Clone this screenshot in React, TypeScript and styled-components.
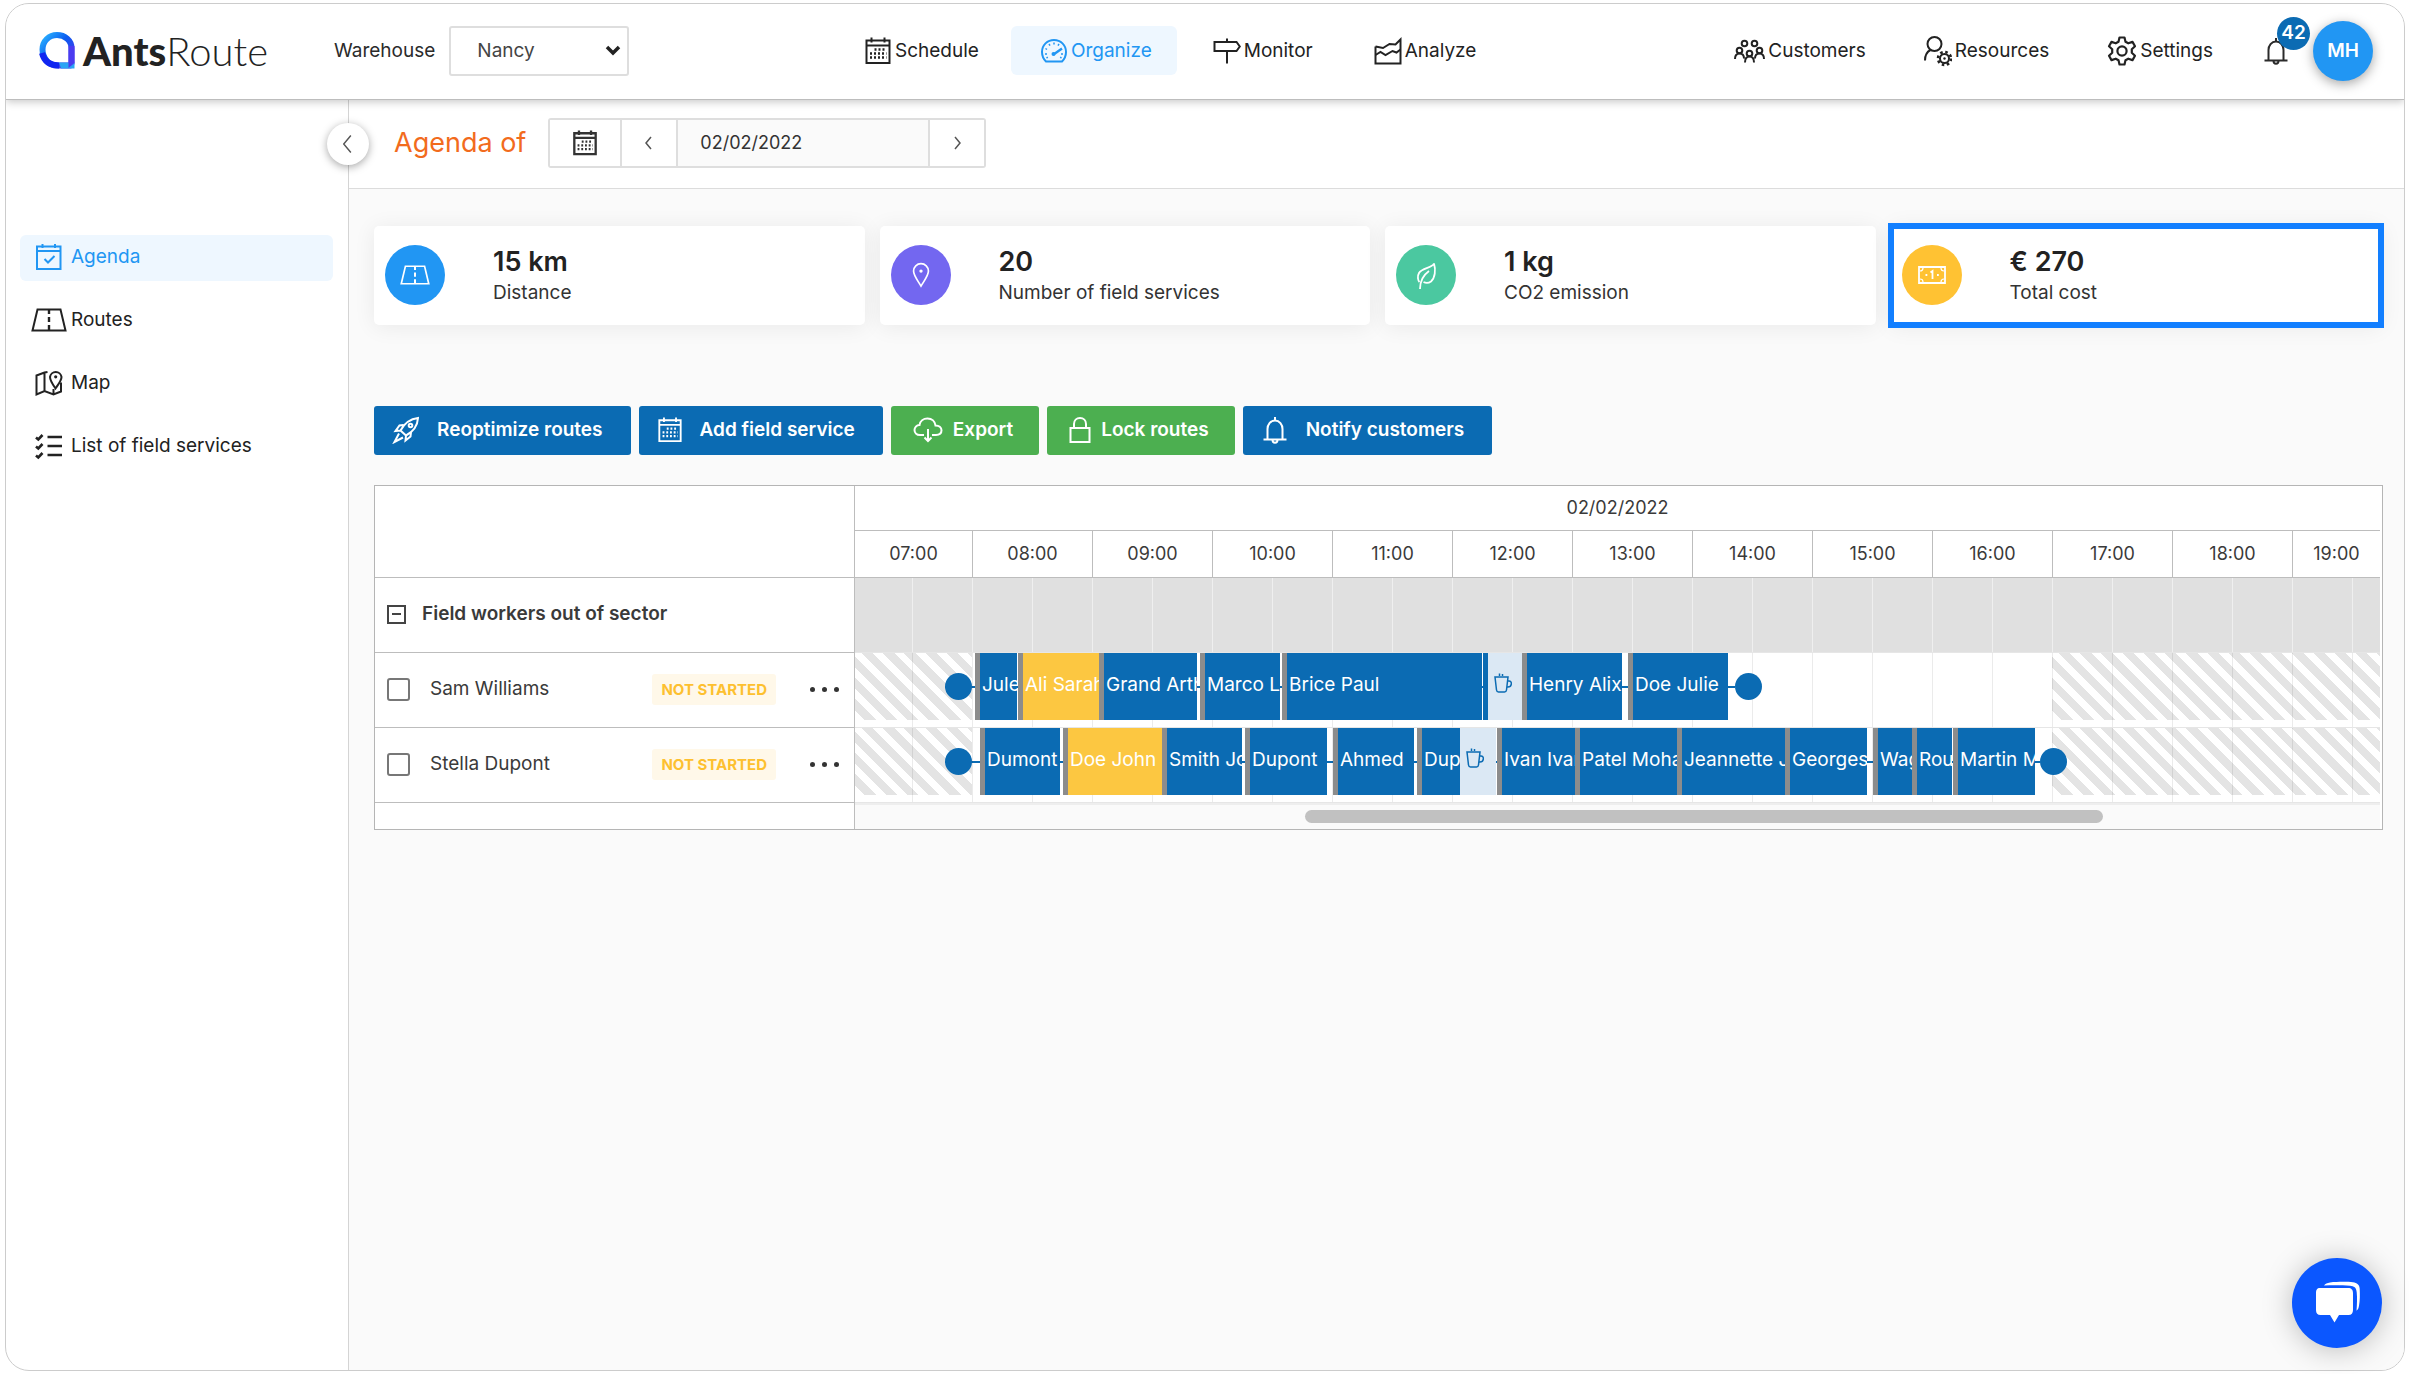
import React from "react";
import styled, { createGlobalStyle } from "styled-components";

const GlobalStyle = createGlobalStyle`
  *, *::before, *::after { box-sizing: border-box; }
  body { margin: 0; background: #fff; color: #2b2b2b; font: 400 19px/24px Inter, "Open Sans", sans-serif; }
  button, input, select { font: inherit; color: inherit; }
  button { cursor: pointer; }
  h1, p { margin: 0; }
  svg { display: block; flex: none; }
`;

const BLUE = "#0b6bb3";
const SKY = "#2196f3";
const ORANGE = "#f26b1d";
const YELLOW = "#fcc741";
const LINE = "#bdbdbd";
const SOFT = "#dedede";

/* ---------- icons ---------- */

type IconProps = { size?: number; width?: number; sw?: number };

const Svg = ({ size = 28, width, sw = 2, children }: IconProps & { children: React.ReactNode }) => (
  <svg width={width ?? size} height={size} viewBox={`0 0 ${((width ?? size) / size) * 28} 28`} fill="none"
    stroke="currentColor" strokeWidth={sw} aria-hidden="true">
    {children}
  </svg>
);

const CalendarIcon = (p: IconProps) => (
  <Svg {...p}>
    <path d="M2.500 3.500h23v22.500H2.500zM2.500 8.500h23M7.500 0.500v5M20.500 0.500v5" />
    <path d="M10.500 12.500h12M6 16.500h16.500M6 20.500h16.500" strokeDasharray="2 2" strokeWidth={2.4} />
  </Svg>
);
const CalendarCheckIcon = (p: IconProps) => (
  <Svg {...p}>
    <path d="M2 3.500h23.500v22.500H2zM2 8h23.500M7.500 1v4M20 1v4M9.500 16l3.500 3.500 6.500-6.500" />
  </Svg>
);
const GaugeIcon = (p: IconProps) => (
  <Svg {...p}>
    <path d="M6 24.500h16c3-3 4-6 4-9.500C26 8 20.600 3 14 3S2 8 2 15c0 3.500 1 6.500 4 9.500z" />
    <path d="M14 5.500v2M9 7l1 1.600M19 7l-1 1.600M5.500 11.500l1.500 1M5 17h2M21 17h2M6.500 21l1.300-.8M21.500 21l-1.300-.8" strokeWidth={1.5} />
    <path d="M13.500 17.500L22 11.500" strokeWidth={2.4} />
    <circle cx="13.500" cy="17" r="2" fill="currentColor" stroke="none" />
  </Svg>
);
const SignIcon = (p: IconProps) => (
  <Svg {...p}>
    <path d="M1.500 5h22l3.300 4.500-3.300 4.500h-22zM14 1.500V5M14 14v12.500" />
  </Svg>
);
const ChartIcon = (p: IconProps) => (
  <Svg {...p}>
    <path d="M1.500 9.500v17h25V2.500l-5 5-6-.5-6.500 4-7.500-1.500" />
    <path d="M1.500 18l5-3 5 3 7-4 4 1.500 4-3" />
  </Svg>
);
const PeopleIcon = ({ sw = 2 }: IconProps) => (
  <svg width={31} height={28} viewBox="0 0 31 28" fill="none" stroke="currentColor" strokeWidth={sw} aria-hidden="true">
    <circle cx="10.500" cy="6.500" r="2.800" /><circle cx="20.500" cy="6.500" r="2.800" />
    <circle cx="5.500" cy="13.500" r="2.800" /><circle cx="25.500" cy="13.500" r="2.800" />
    <circle cx="15.500" cy="16.500" r="2.800" />
    <path d="M1 22c0-3.500 1.500-5.500 4.500-5.500S10 18 10 21.500M30 22c0-3.500-1.500-5.500-4.500-5.500S21 18 21 21.500M11 25.500c0-4 1.500-6 4.500-6s4.500 2 4.500 6" />
  </svg>
);
const UserGearIcon = ({ sw = 2 }: IconProps) => (
  <svg width={28} height={32} viewBox="1 0 28 32" fill="none" stroke="currentColor" strokeWidth={sw} aria-hidden="true">
    <circle cx="11.500" cy="9" r="7" />
    <path d="M2 25.500c0-5 1.500-8.500 5.500-10.500" />
    <circle cx="21.500" cy="23.500" r="4.500" />
    <circle cx="21.500" cy="23.500" r="6.500" strokeWidth={2.600} strokeDasharray="2.500 2.600" />
    <circle cx="21.500" cy="23.500" r="1.200" fill="currentColor" stroke="none" />
  </svg>
);
const GearIcon = ({ size = 30, sw = 2.2 }: IconProps) => (
  <svg width={size} height={size} viewBox="0 0 30 30" fill="none" stroke="currentColor" strokeWidth={sw} strokeLinejoin="round" aria-hidden="true">
    <path d="M12.500 1.500h5l1 4.200 2.800 1.600 4.200-1.400 2.500 4.300-3.200 3v3.600l3.200 3-2.500 4.300-4.200-1.400-2.800 1.600-1 4.200h-5l-1-4.200-2.800-1.600-4.200 1.400L2 19.800l3.200-3v-3.600l-3.200-3 2.500-4.300 4.200 1.400 2.800-1.600z" />
    <circle cx="15" cy="15" r="4.600" />
  </svg>
);
const BellIcon = (p: IconProps) => (
  <Svg {...p}>
    <path d="M2.500 23.500h23M6.500 23.500V13c0-4.500 3-8.500 7.500-8.500s7.500 4 7.500 8.500v10.500M14 1v3.500M11.500 24c0 3.500 5 3.500 5 0" />
  </Svg>
);
const RoadIcon = ({ width = 36, size = 24, sw = 2 }: IconProps) => (
  <svg width={width} height={size} viewBox="0 0 36 24" fill="none" stroke="currentColor" strokeWidth={sw} aria-hidden="true">
    <path d="M6.500 1.500h23l5 21h-33z" />
    <path d="M18 2v4M18 9v5M18 17v5" strokeWidth={sw * 1.200} />
  </svg>
);
const MapIcon = (p: IconProps) => (
  <Svg {...p}>
    <path d="M12.500 3L9.500 3.500 1.500 6.500v19l8-3.500 9 3.500 7.500-3v-9M9.500 3.500V22M18.500 20v5" />
    <path d="M20.500 19.500c-3.500-5-5.500-8-5.500-11.500a5.800 5.800 0 0 1 11.500 0c0 3.500-2.500 6.500-6 11.500z" />
    <circle cx="20.700" cy="7.800" r="1.600" fill="currentColor" stroke="none" />
  </Svg>
);
const ListIcon = (p: IconProps) => (
  <Svg {...p}>
    <path d="M12.500 5h14.500M12.500 14h14.500M12.500 23h14.500" strokeWidth={2.400} />
    <path d="M1 5.500l2.300 2L7.500 3M1 14.500l2.300 2L7.500 12M1 23.500l2.300 2L7.500 21" strokeWidth={2.600} />
  </Svg>
);
const PinIcon = (p: IconProps) => (
  <Svg {...p}>
    <path d="M14 26C9.500 18.500 6 14.500 6 9.800a8 8 0 0 1 16 0C22 14.500 18.500 18.500 14 26z" />
    <circle cx="14" cy="9.800" r="1.800" fill="currentColor" stroke="none" />
  </Svg>
);
const LeafIcon = (p: IconProps) => (
  <Svg {...p}>
    <path d="M22 2.500C20.500 7 10 6.500 7 12c-2 3.500-1 7.500.5 9M22 2.500c2 6.500 1 14.500-3 18-3 2-5.500 1.500-7.500.5M8 28C8 19.500 11.500 14 17 10" />
  </Svg>
);
const BankNoteIcon = () => (
  <svg width={28} height={18} viewBox="0 0 28 18" fill="none" stroke="currentColor" strokeWidth={1.800} aria-hidden="true">
    <path d="M1 1h26v16H1z" />
    <path d="M2 5c2 0 3-1 3-3M26 5c-2 0-3-1-3-3M2 13c2 0 3 1 3 3M26 13c-2 0-3 1-3 3" strokeWidth={1.200} />
    <path d="M12.500 6.500L14.500 5v8M7.500 9h1.800M19 9h1.800" />
  </svg>
);
const RocketIcon = (p: IconProps) => (
  <Svg {...p}>
    <path d="M8.500 14.500C12 8 17.500 3 26 2c-.5 8.500-5.500 14-12 17.500zM8.500 14.500l-5 .5 4-5.500 4-.500M14 19.500l-.5 5 5-4 .5-4M7 17.500l-4.500 8.500 8.500-4.500" />
    <circle cx="18.500" cy="9.500" r="1.800" />
  </Svg>
);
const CloudIcon = ({ sw = 2 }: IconProps) => (
  <svg width={30} height={26} viewBox="0 0 30 26" fill="none" stroke="currentColor" strokeWidth={sw} aria-hidden="true">
    <path d="M11 18H7C3.500 18 1.500 15.500 1.500 13s2-5 5-5C7 4 10.500 1.500 14.500 1.500c4.500 0 7.500 3 8 7 3.500 0 6 2 6 4.800S26.500 18 23 18h-4M15 12v12M11.500 20.500L15 24l3.500-3.500" />
  </svg>
);
const LockIcon = ({ sw = 2 }: IconProps) => (
  <svg width={22} height={26} viewBox="0 0 22 26" fill="none" stroke="currentColor" strokeWidth={sw} aria-hidden="true">
    <path d="M1.500 11h19v14h-19zM5 11V7c0-3.500 2.500-6 6-6s6 2.500 6 6v4" />
  </svg>
);
const CupIcon = () => (
  <svg width={18} height={20} viewBox="0 0 18 20" fill="none" stroke={BLUE} strokeWidth={1.500} aria-hidden="true">
    <path d="M1 4h13l-1.500 13c-.2 1.500-1 2-2 2h-6c-1 0-1.800-.5-2-2zM13.700 8H15c3.500 0 3 6-1 6h-1M5.500.5V3M8.500 1v2" />
  </svg>
);
const Chevron = ({ dir, size = 14, sw = 1.5 }: { dir: "left" | "right"; size?: number; sw?: number }) => (
  <svg width={size} height={size} viewBox="0 0 14 14" fill="none" stroke="#555" strokeWidth={sw} aria-hidden="true">
    <path d={dir === "left" ? "M9 1L4 7l5 6" : "M5 1l5 6-5 6"} />
  </svg>
);
const LogoMark = () => (
  <svg width={36} height={37} viewBox="0 0 36 37" aria-hidden="true">
    <defs>
      <linearGradient id="arc" x1="0" y1="0" x2="1" y2="1">
        <stop offset="0" stopColor="#2bb5ff" /><stop offset=".45" stopColor="#0a5cf0" /><stop offset="1" stopColor="#5a2fe8" />
      </linearGradient>
    </defs>
    <path d="M32.500 32.500V16C32.500 8.500 26 3 18 3S3.500 9 3.500 17.500 10 33.500 18 33.500h14.500" fill="none" stroke="url(#arc)" strokeWidth="6" />
    <path d="M3 21C5 29 11 33.500 20 33.500" fill="none" stroke="#1026f0" strokeWidth="6" />
    <path d="M20 30.500l2 6h13.500v-6z" fill="#2aa4f4" />
    <path d="M29.500 14h6v17l-6 5z" fill="#4b3bf0" />
  </svg>
);
const ChatIcon = () => (
  <svg width={46} height={46} viewBox="0 0 46 46" aria-hidden="true">
    <path d="M6 8h28c3.500 0 5 2 5 5v17c0 3-1.500 5-4.500 5H25l-4.500 7.500L16 35H6.500C3.500 35 2 33.500 2 30V13c0-3 1-5 4-5z" fill="#fff" />
    <path d="M10 5.500C11.500 3.500 13 3 16 2.500c7-.8 17-.8 23-.3 4 .5 6.500 2.500 6.700 6.500.3 6 .3 12-.7 17-.3 2-1 4-2.500 5 .5-6 .8-13 .2-18.500C42.300 7.500 40 6 36 5.800 28 5 18 5 10 5.500z" fill="#fff" />
  </svg>
);

/* ---------- frame and header ---------- */

const Frame = styled.div`
  display: flex; flex-direction: column;
  min-height: calc(100vh - 6px);
  margin: 3px 4px 3px 5px;
  border: 1px solid #ccc; border-radius: 24px;
  overflow: hidden; background: #fff;
`;
const Header = styled.header`
  position: relative; z-index: 2;
  display: flex; align-items: center;
  height: 96px; padding: 0 31px 2px 33px;
  background: #fff; border-bottom: 1px solid ${LINE};
  box-shadow: 0 2px 8px rgba(0, 0, 0, 0.22);
`;
const Logo = styled.a`
  display: flex; align-items: center; gap: 8px; width: 295px;
  color: #222; text-decoration: none;
  font: 300 40px/48px Lato, sans-serif;
  b { font-weight: 900; }
`;
const WarehouseField = styled.label`
  display: flex; align-items: center; gap: 14px; width: 501px;
`;
const Select = styled.select`
  appearance: none; width: 180px; height: 50px; padding: 0 26px;
  border: 2px solid ${SOFT}; border-radius: 3px; color: #444;
  background: #fff url("data:image/svg+xml,%3Csvg xmlns='http://www.w3.org/2000/svg' width='16' height='12' fill='none' stroke='%23222' stroke-width='3.500'%3E%3Cpath d='M2 2l6 6 6-6'/%3E%3C/svg%3E") no-repeat right 6px center;
`;
const Nav = styled.nav<{ $end?: boolean }>`
  display: flex; gap: ${(p) => (p.$end ? 4 : 7)}px; margin-left: ${(p) => (p.$end ? "auto" : "0")};
`;
const NavLink = styled.a<{ $active?: boolean }>`
  display: flex; align-items: center; gap: 3px; height: 49px;
  padding: 0 25px 0 29px; border-radius: 6px; text-decoration: none;
  color: ${(p) => (p.$active ? SKY : "#222")};
  background: ${(p) => (p.$active ? "#eef7ff" : "transparent")};
`;
const BellButton = styled.button`
  position: relative; padding: 0; margin: 0 23px 0 24px;
  border: 0; background: none;
`;
const Badge = styled.span`
  position: absolute; left: 15px; top: -20px;
  width: 33px; height: 33px; border-radius: 50%;
  background: ${BLUE}; color: #fff; font-weight: 600; line-height: 32px;
`;
const Avatar = styled.button`
  width: 60px; height: 60px; padding: 0; border: 0; border-radius: 50%;
  background: ${SKY}; color: #fff; font-weight: 600;
  box-shadow: 0 3px 12px rgba(0, 0, 0, 0.35);
`;

/* ---------- sidebar ---------- */

const Body = styled.div`display: flex; flex: 1;`;
const Sidebar = styled.aside`
  position: relative; flex: none; width: 343px; padding: 135px 15px 0 14px;
  border-right: 1px solid #d4d4d4;
`;
const SideNav = styled.nav`display: flex; flex-direction: column; gap: 17px;`;
const SideLink = styled.a<{ $active?: boolean }>`
  display: grid; grid-template-columns: 36px 1fr; align-items: center; column-gap: 4px;
  height: 46px; padding: 0 0 3px 11px; border-radius: 6px; text-decoration: none;
  color: ${(p) => (p.$active ? SKY : "#222")};
  background: ${(p) => (p.$active ? "#eef7ff" : "transparent")};
  svg { justify-self: center; }
`;
const Collapse = styled.button`
  position: absolute; top: 23px; right: -21px; z-index: 1;
  display: grid; place-items: center; width: 42px; height: 42px; padding: 0;
  border: 0; border-radius: 50%; background: #fff;
  box-shadow: 0 2px 9px rgba(0, 0, 0, 0.35);
`;

/* ---------- main ---------- */

const Main = styled.main`flex: 1; min-width: 0; background: #fafafa;`;
const TitleBar = styled.div`
  display: flex; align-items: center; gap: 22px;
  height: 89px; padding: 0 0 2px 45px;
  background: #fff; border-bottom: 1px solid #dcdcdc;
`;
const Title = styled.h1`font-size: 27px; line-height: 32px; font-weight: 400; color: ${ORANGE};`;
const DateGroup = styled.div`
  display: flex; height: 50px; border: 2px solid ${SOFT}; border-radius: 3px; color: #333; font-size: 18px;
`;
const DateButton = styled.button<{ $wide?: boolean }>`
  display: grid; place-items: center; width: ${(p) => (p.$wide ? 70 : 54)}px; padding: 0;
  border: 0; background: #fff;
`;
const DateInput = styled.input`
  width: 254px; padding: 0 22px; margin: 0; background: #fafafa;
  border: solid ${SOFT}; border-width: 0 2px;
`;
const Divider = styled.span`width: 2px; background: ${SOFT};`;
const Content = styled.div`padding: 37px 21px 0 25px;`;

const Cards = styled.section`
  display: grid; grid-template-columns: repeat(4, 1fr); gap: 15px; margin-right: 2px;
`;
const Card = styled.article<{ $selected?: boolean }>`
  display: flex; align-items: center; gap: 48px; height: 99px; padding: 0 11px 2px;
  background: #fff; border-radius: ${(p) => (p.$selected ? 0 : 5)}px;
  outline: ${(p) => (p.$selected ? "6px solid #127fff" : "none")};
  outline-offset: -3px;
  box-shadow: 0 2px 22px rgba(0, 0, 0, 0.07);
`;
const Disc = styled.span<{ $color: string }>`
  display: grid; place-items: center; width: 60px; height: 60px; border-radius: 50%;
  background: ${(p) => p.$color}; color: #fff;
`;
const CardText = styled.div`padding-top: 4px;`;
const Figure = styled.p`font-size: 27px; line-height: 32px; font-weight: 600; color: #222;`;
const Caption = styled.p`line-height: 30px; color: #333;`;

const Actions = styled.div`display: flex; gap: 8px; margin-top: 81px;`;
const Action = styled.button<{ $green?: boolean }>`
  display: flex; align-items: center; justify-content: center; gap: ${(p) => (p.$green ? 10 : 17)}px;
  height: 49px; padding: ${(p) => (p.$green ? "0 26px 2px 22px" : "0 28px 2px 18px")};
  border: 0; border-radius: 3px; font-weight: 600;
  color: #fff; background: ${(p) => (p.$green ? "#4caf50" : BLUE)};
`;

/* ---------- planning ---------- */

const Board = styled.div`
  margin-top: 30px; padding-right: 2px; background: #fff; border: 1px solid #b5b5b5;
`;
const Table = styled.table`
  width: 100%; table-layout: fixed; border-collapse: separate; border-spacing: 0; color: #3a3a3a;
  th, td { padding: 0; font-weight: 400; text-align: center; }
`;
const HeadCell = styled.th<{ $h: number }>`
  height: ${(p) => p.$h}px; font-size: 18px;
  border-bottom: 1px solid ${LINE}; border-right: 1px solid ${LINE};
  &:last-child { border-right: 0; }
`;
const SideCell = styled.th`
  border-right: 1px solid ${LINE}; border-bottom: 1px solid ${LINE};
  tr:last-child > & { border-bottom: 0; }
`;
const Resource = styled.div`
  display: flex; align-items: center; height: 74px; padding: 0 15px 2px 12px;
`;
const GroupName = styled.span`margin-left: 16px; font-weight: 600;`;
const Toggle = styled.button`
  display: grid; place-items: center; width: 19px; height: 19px; padding: 0; border: 2px solid #444; background: #fff;
  &::before { content: ""; width: 9px; height: 2px; background: #444; }
`;
const Check = styled.label`
  display: flex; align-items: center; gap: 20px; flex: 1;
  input { appearance: none; width: 23px; height: 23px; margin: 0; border: 2px solid #777; border-radius: 3px; background: #fff; }
`;
const Status = styled.span`
  padding: 0 9px; border-radius: 3px; background: #fff8e9; color: #fdc02f;
  font-size: 15px; font-weight: 700; line-height: 31px;
`;
const More = styled.button`
  display: flex; gap: 7px; margin: 0 0 0 34px; padding: 0; border: 0; background: none;
  i { width: 5px; height: 5px; border-radius: 50%; background: #333; }
`;
const LaneCell = styled.td`border-bottom: 1px solid #e6e6e6;`;
const Lane = styled.div<{ $closed?: boolean }>`
  position: relative; height: 74px; overflow: hidden; text-align: left;
  background: ${(p) => (p.$closed ? "#e0e0e0" : "#fff")};
  &::after {
    content: ""; position: absolute; inset: 0;
    background: repeating-linear-gradient(90deg, transparent 0 59px, ${(p) => (p.$closed ? "#efefef" : "rgba(0,0,0,.08)")} 59px 60px) -2px 0;
  }
`;
const OffHours = styled.div<{ $end?: boolean }>`
  position: absolute; top: 0; height: 67px;
  ${(p) => (p.$end ? "right: 0; left: 1197px;" : "left: 0; width: 117px;")}
  background: repeating-linear-gradient(45deg, #fff 0 7px, #e4e4e4 7px 15px);
`;
const Visit = styled.div<{ $tone: string }>`
  position: absolute; z-index: 1; top: 0; height: 67px;
  padding-left: ${(p) => (p.$tone === "break" ? 6 : 2)}px; overflow: hidden; white-space: nowrap;
  line-height: 64px; color: #fff;
  border-left: ${(p) => (p.$tone === "break" || p.$tone === "plain" ? "0" : "5px solid #8c8c8c")};
  background: ${(p) => (p.$tone === "late" ? YELLOW : p.$tone === "break" ? "#dbe8f4" : BLUE)};
  svg { margin-top: 20px; }
`;
const Travel = styled.div`
  position: absolute; top: 33px; height: 2px; background: ${BLUE};
`;
const Depot = styled.div`
  position: absolute; z-index: 1; top: 20px; width: 27px; height: 27px; border-radius: 50%; background: ${BLUE};
`;
const ScrollTrack = styled.div`
  height: 26px; padding: 5px 0 0; background: #fafafa; border-top: 2px solid #eee;
`;
const ScrollThumb = styled.div`
  width: 798px; height: 13px; margin-left: 450px; border-radius: 7px; background: #c1c1c1;
`;
const ChatButton = styled.button`
  position: fixed; right: 27px; bottom: 26px; display: grid; place-items: center;
  width: 90px; height: 90px; padding: 0; border: 0; border-radius: 50%; background: #0b57ff;
  box-shadow: 0 2px 30px rgba(0, 0, 0, 0.25);
`;

/* Pixels from the left edge of the visible timeline; one minute is two pixels. */
type Slot = { from: number; to: number; label?: string; tone?: "late" | "break" | "plain" };
type Worker = { name: string; start: number; end: number; slots: Slot[] };

const workers: Worker[] = [
  {
    name: "Sam Williams", start: 90, end: 880,
    slots: [
      { from: 120, to: 162, label: "Jule" },
      { from: 163, to: 244, label: "Ali Sarah", tone: "late" },
      { from: 244, to: 342, label: "Grand Arth" },
      { from: 345, to: 425, label: "Marco L" },
      { from: 427, to: 627, label: "Brice Paul" },
      { from: 628, to: 633, tone: "plain" },
      { from: 633, to: 667, tone: "break" },
      { from: 667, to: 767, label: "Henry Alix" },
      { from: 773, to: 873, label: "Doe Julie" },
    ],
  },
  {
    name: "Stella Dupont", start: 90, end: 1185,
    slots: [
      { from: 125, to: 205, label: "Dumont" },
      { from: 208, to: 307, label: "Doe John", tone: "late" },
      { from: 307, to: 387, label: "Smith Jo" },
      { from: 390, to: 472, label: "Dupont" },
      { from: 478, to: 559, label: "Ahmed" },
      { from: 562, to: 605, label: "Dup" },
      { from: 605, to: 641, tone: "break" },
      { from: 642, to: 720, label: "Ivan Ivan" },
      { from: 720, to: 822, label: "Patel Moha" },
      { from: 822, to: 930, label: "Jeannette J" },
      { from: 930, to: 1012, label: "Georges" },
      { from: 1018, to: 1057, label: "Wag" },
      { from: 1057, to: 1097, label: "Rou" },
      { from: 1098, to: 1180, label: "Martin M" },
    ],
  },
];

const hours = ["07:00", "08:00", "09:00", "10:00", "11:00", "12:00", "13:00", "14:00", "15:00", "16:00", "17:00", "18:00", "19:00"];

const stats = [
  { color: SKY, icon: <RoadIcon width={30} size={20} />, value: "15 km", label: "Distance" },
  { color: "#7367f0", icon: <PinIcon size={26} sw={1.800} />, value: "20", label: "Number of field services" },
  { color: "#4bc8a0", icon: <LeafIcon size={28} sw={1.800} />, value: "1 kg", label: "CO2 emission" },
  { color: "#ffc233", icon: <BankNoteIcon />, value: "€ 270", label: "Total cost", selected: true },
];

const WorkerRow = ({ worker }: { worker: Worker }) => (
  <tr>
    <SideCell scope="row">
      <Resource>
        <Check><input type="checkbox" />{worker.name}</Check>
        <Status>NOT STARTED</Status>
        <More aria-label={`Options for ${worker.name}`}><i /><i /><i /></More>
      </Resource>
    </SideCell>
    <LaneCell colSpan={13}>
      <Lane>
        <OffHours /><OffHours $end />
        <Travel style={{ left: worker.start, width: worker.end - worker.start }} />
        <Depot style={{ left: worker.start }} />
        {worker.slots.map((s) => (
          <Visit key={s.from} $tone={s.tone ?? "visit"} style={{ left: s.from, width: s.to - s.from }}>
            {s.tone === "break" ? <CupIcon /> : s.label}
          </Visit>
        ))}
        <Depot style={{ left: worker.end }} />
      </Lane>
    </LaneCell>
  </tr>
);

export default function App() {
  return (
    <>
      <GlobalStyle />
      <Frame>
        <Header>
          <Logo href="#"><LogoMark /><span><b>Ants</b>Route</span></Logo>
          <WarehouseField>Warehouse
            <Select defaultValue="Nancy"><option>Nancy</option></Select>
          </WarehouseField>
          <Nav>
            <NavLink href="#"><CalendarIcon />Schedule</NavLink>
            <NavLink href="#" $active><GaugeIcon />Organize</NavLink>
            <NavLink href="#"><SignIcon />Monitor</NavLink>
            <NavLink href="#"><ChartIcon />Analyze</NavLink>
          </Nav>
          <Nav $end>
            <NavLink href="#"><PeopleIcon />Customers</NavLink>
            <NavLink href="#"><UserGearIcon />Resources</NavLink>
            <NavLink href="#"><GearIcon />Settings</NavLink>
          </Nav>
          <BellButton aria-label="Notifications"><BellIcon /><Badge>42</Badge></BellButton>
          <Avatar>MH</Avatar>
        </Header>
        <Body>
          <Sidebar>
            <Collapse aria-label="Collapse menu"><Chevron dir="left" size={20} sw={1} /></Collapse>
            <SideNav>
              <SideLink href="#" $active><CalendarCheckIcon />Agenda</SideLink>
              <SideLink href="#"><RoadIcon />Routes</SideLink>
              <SideLink href="#"><MapIcon />Map</SideLink>
              <SideLink href="#"><ListIcon />List of field services</SideLink>
            </SideNav>
          </Sidebar>
          <Main>
            <TitleBar>
              <Title>Agenda of</Title>
              <DateGroup>
                <DateButton $wide aria-label="Open calendar"><CalendarIcon size={26} sw={2.500} /></DateButton>
                <Divider />
                <DateButton aria-label="Previous day"><Chevron dir="left" /></DateButton>
                <DateInput aria-label="Date" defaultValue="02/02/2022" />
                <DateButton aria-label="Next day"><Chevron dir="right" /></DateButton>
              </DateGroup>
            </TitleBar>
            <Content>
              <Cards>
                {stats.map((s) => (
                  <Card key={s.label} $selected={s.selected}>
                    <Disc $color={s.color}>{s.icon}</Disc>
                    <CardText><Figure>{s.value}</Figure><Caption>{s.label}</Caption></CardText>
                  </Card>
                ))}
              </Cards>
              <Actions>
                <Action><RocketIcon />Reoptimize routes</Action>
                <Action><CalendarIcon size={26} />Add field service</Action>
                <Action $green><CloudIcon />Export</Action>
                <Action $green><LockIcon />Lock routes</Action>
                <Action><BellIcon />Notify customers</Action>
              </Actions>
              <Board>
                <Table>
                  <colgroup>
                    <col width={480} /><col width={118} />
                    {hours.slice(2).map((h) => <col key={h} width={120} />)}
                    <col />
                  </colgroup>
                  <thead>
                    <tr><HeadCell $h={92} rowSpan={2} /><HeadCell $h={45} colSpan={13}>02/02/2022</HeadCell></tr>
                    <tr>{hours.map((h) => <HeadCell key={h} $h={47}>{h}</HeadCell>)}</tr>
                  </thead>
                  <tbody>
                    <tr>
                      <SideCell scope="row">
                        <Resource><Toggle aria-label="Collapse group" /><GroupName>Field workers out of sector</GroupName></Resource>
                      </SideCell>
                      <LaneCell colSpan={13}><Lane $closed /></LaneCell>
                    </tr>
                    {workers.map((w) => <WorkerRow key={w.name} worker={w} />)}
                    <tr>
                      <SideCell as="td" />
                      <td colSpan={13}><ScrollTrack><ScrollThumb /></ScrollTrack></td>
                    </tr>
                  </tbody>
                </Table>
              </Board>
            </Content>
          </Main>
        </Body>
      </Frame>
      <ChatButton aria-label="Open chat"><ChatIcon /></ChatButton>
    </>
  );
}
